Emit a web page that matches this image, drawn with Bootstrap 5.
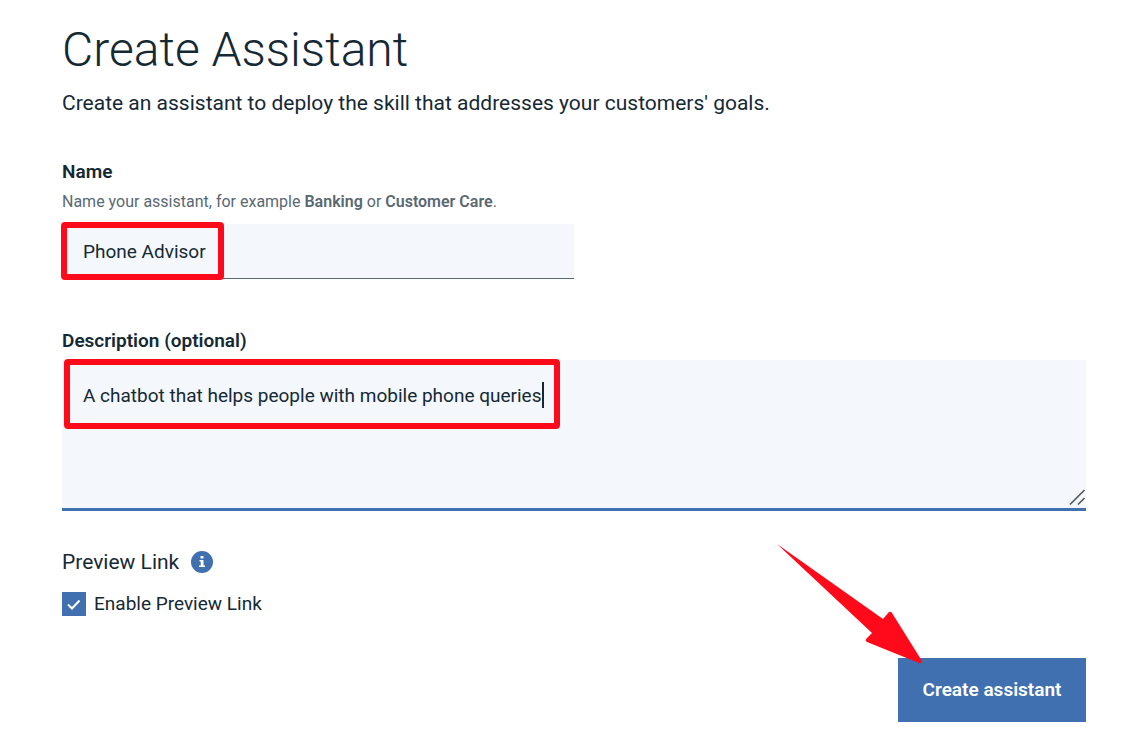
<!DOCTYPE html>
<html lang="en">
<head>
<meta charset="utf-8">
<meta name="viewport" content="width=device-width, initial-scale=1">
<title>Create Assistant</title>
<link href="https://cdn.jsdelivr.net/npm/bootstrap@5.3.0/dist/css/bootstrap.min.css" rel="stylesheet">
<style>
  :root { --ink: #152935; --muted: #5a6872; --brand: #4070b0; --field: #f4f7fb; --marker: #ff0a1b; }
  body { font-family: Roboto, "Liberation Sans", sans-serif; color: var(--ink); background: #fff; font-size: 19px; line-height: 24px; }
  .page { padding: 20px 38px 32px 62px; }
  .page-title { font-size: 48px; line-height: 60px; font-weight: 300; }
  .intro { font-size: 21px; line-height: 28px; margin: 9px 0 43px; }
  .field-label { font-weight: 600; line-height: 24px; display: block; }
  .hint { font-size: 16px; line-height: 20px; color: var(--muted); margin: 8px 0 12px; }
  .hint strong { font-weight: 600; }
  .desc-label { margin: 50px 0 7px; }
  .form-control.plain, .form-control.plain:focus { background: var(--field); color: var(--ink); border: 0; border-radius: 0; box-shadow: none; font-size: 19px; line-height: 24px; }
  .form-control.plain.name-input { height: 55px; padding: 0 21px; border-bottom: 1px solid var(--muted); }
  .form-control.plain.desc-input { height: 151px; padding: 24px 21px; border-bottom: 3px solid var(--brand); resize: none; display: block; }
  .marker { position: absolute; border: 6px solid var(--marker); border-radius: 4px; pointer-events: none; }
  .marker-name { left: -1px; top: -2px; width: 163px; height: 58px; }
  .marker-desc { left: 2px; top: -1px; width: 496px; height: 70px; }
  .caret { position: absolute; right: 10px; top: 17px; width: 2px; height: 26px; background: var(--ink); }
  .grip { position: absolute; right: 0; bottom: 5px; }
  .preview { margin-top: 37px; }
  .preview-title { font-size: 21px; line-height: 28px; font-weight: 400; }
  .info { margin-left: 12px; }
  .form-check-input.tick { width: 24px; height: 24px; border-radius: 0; border: 0; box-shadow: none; }
  .form-check-input.tick:checked { background-color: var(--brand); background-size: 24px 24px;
    background-image: url("data:image/svg+xml,%3Csvg xmlns='http://www.w3.org/2000/svg' viewBox='0 0 24 24'%3E%3Cpath d='M6 12.5l4 4 7.5-8' fill='none' stroke='%23fff' stroke-width='2'/%3E%3C/svg%3E"); }
  .actions { margin-top: 42px; }
  .btn.create { background: var(--brand); color: #fff; border: 0; border-radius: 0; font-size: 19px; line-height: 24px; font-weight: 600; padding: 20px 24px; min-width: 188px; }
  .pointer { position: absolute; right: 163px; bottom: 58px; pointer-events: none; }
</style>
</head>
<body>
<main class="page">
  <h1 class="page-title mb-0">Create Assistant</h1>
  <p class="intro">Create an assistant to deploy the skill that addresses your customers' goals.</p>
  <form>
    <label class="field-label" for="name">Name</label>
    <p class="hint" id="nameHint">Name your assistant, for example <strong>Banking</strong> or <strong>Customer Care</strong>.</p>
    <div class="position-relative w-50">
      <input class="form-control plain name-input" type="text" id="name" value="Phone Advisor" aria-describedby="nameHint">
      <span class="marker marker-name"></span>
    </div>

    <label class="field-label desc-label" for="description">Description (optional)</label>
    <div class="position-relative">
      <textarea class="form-control plain desc-input" id="description">A chatbot that helps people with mobile phone queries</textarea>
      <span class="marker marker-desc"><span class="caret"></span></span>
      <svg class="grip" width="17" height="17" viewBox="0 0 17 17" fill="none" stroke="#50565b" stroke-width="1.6" aria-hidden="true"><path d="M1 15.500 15.500 1M9 15.500 15.500 9"/></svg>
    </div>

    <div class="preview d-flex align-items-center">
      <h2 class="preview-title mb-0">Preview Link</h2>
      <svg class="info" width="22" height="22" viewBox="0 0 22 22" role="img" aria-label="Information"><circle cx="11" cy="11" r="11" fill="#4070b0"/><path fill="#fff" d="M9.500 5h3v2.500h-3zM8.500 9h4v5.500H14V16H8v-1.500h1.700v-4H8.500z"/></svg>
    </div>
    <div class="d-flex align-items-center gap-2 mt-3">
      <input class="form-check-input tick m-0" type="checkbox" id="preview" checked>
      <label for="preview">Enable Preview Link</label>
    </div>

    <div class="actions d-flex justify-content-end position-relative">
      <button class="btn create" type="button">Create assistant</button>
      <svg class="pointer" width="146" height="120" viewBox="0 0 146 120" aria-hidden="true"><path fill="#ff0a1b" d="M0 0 106 75 112 68Q114 67 115 69L145 117Q145 120 142 119L90 98Q88 97 89 95L95 89Z"/></svg>
    </div>
  </form>
</main>
<script src="https://cdn.jsdelivr.net/npm/bootstrap@5.3.0/dist/js/bootstrap.bundle.min.js"></script>
</body>
</html>
